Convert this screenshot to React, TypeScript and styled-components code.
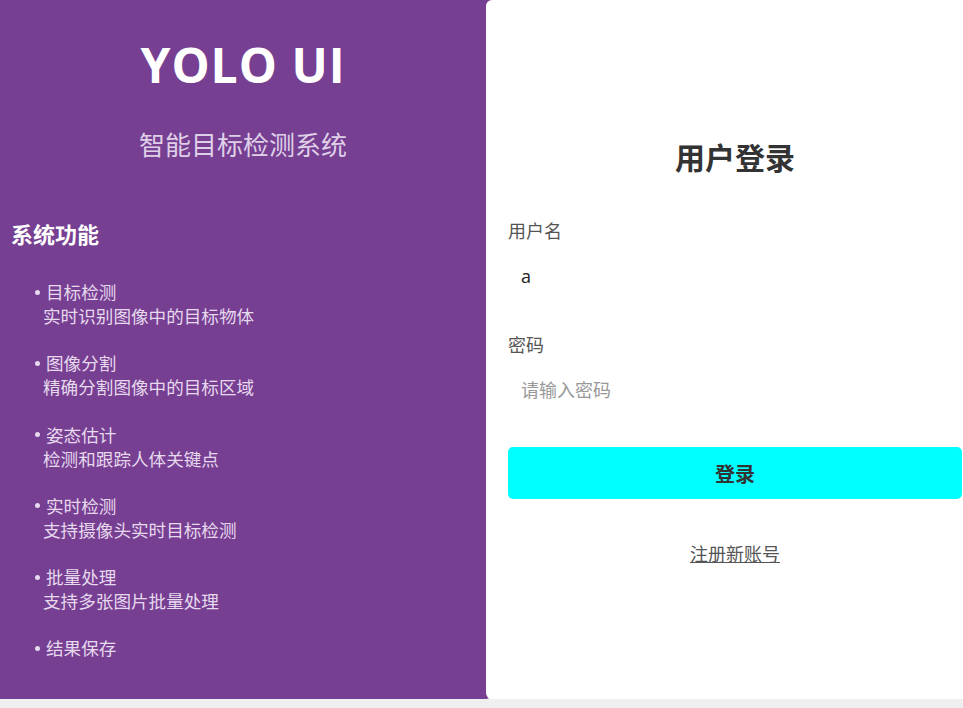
import React from "react";
import styled, { createGlobalStyle } from "styled-components";

const GlobalStyle = createGlobalStyle`
  html, body {
    margin: 0;
    padding: 0;
    background: #efefef;
    overflow: hidden;
  }
  body {
    font-family: "Open Sans", "Noto Sans CJK SC", sans-serif;
  }
  * { box-sizing: border-box; }
`;

const Page = styled.div`
  display: flex;
  height: 699px;
  width: 984px;
`;

const Intro = styled.section`
  flex: 0 0 492px;
  margin-right: -6px;
  background: #763f92;
  border-radius: 0 0 6px 0;
  padding: 0 16px 0 10px;
  color: #e6d9ee;
`;

const Brand = styled.h1`
  margin: 0;
  padding-top: 32px;
  text-align: center;
  font-size: 48px;
  line-height: 66px;
  font-weight: 700;
  letter-spacing: 1px;
  color: #ffffff;
`;

const Tagline = styled.p`
  margin: 29px 0 0;
  text-align: center;
  font-size: 26px;
  line-height: 36px;
  color: #dfd0e8;
`;

const SectionTitle = styled.h2`
  margin: 55px 0 0 1px;
  font-size: 22px;
  line-height: 32px;
  font-weight: 700;
  color: #ffffff;
`;

const FeatureList = styled.ul`
  list-style: none;
  margin: 30px 0 0;
  padding: 0 0 0 24px;
`;

const Feature = styled.li`
  font-size: 17.6px;
  line-height: 24px;
  margin-bottom: 23.3px;
`;

const FeatureName = styled.div`
  display: flex;
  align-items: center;
  padding-left: 1px;
`;

const Dot = styled.span`
  width: 5px;
  height: 5px;
  border-radius: 50%;
  background: #e6d9ee;
  margin-right: 6px;
  flex: none;
`;

const FeatureDesc = styled.div`
  padding-left: 9px;
`;

const LoginCard = styled.section`
  flex: 0 0 498px;
  background: #ffffff;
  border-radius: 6px;
  padding: 140px 22px 0;
  display: flex;
  flex-direction: column;
`;

const LoginTitle = styled.h2`
  margin: 0 0 42px;
  text-align: center;
  font-size: 30px;
  line-height: 36px;
  font-weight: 700;
  color: #333333;
`;

const Field = styled.div`
  display: flex;
  flex-direction: column;
  margin-bottom: 31px;
`;

const Label = styled.label`
  font-size: 18px;
  line-height: 27px;
  color: #555555;
`;

const Input = styled.input`
  margin-top: 6px;
  height: 50px;
  border: none;
  outline: none;
  padding: 0 13px;
  font-family: inherit;
  font-size: 18px;
  color: #222222;
  background: #ffffff;
  &::placeholder {
    color: #999999;
  }
`;

const SubmitButton = styled.button`
  flex: none;
  margin-top: 1px;
  height: 52px;
  border: none;
  border-radius: 5px;
  background: #00ffff;
  color: #333333;
  font-family: inherit;
  font-size: 20px;
  font-weight: 700;
  cursor: pointer;
`;

const RegisterLink = styled.a`
  margin-top: 42px;
  align-self: center;
  font-size: 18px;
  line-height: 27px;
  color: #555555;
  text-decoration: underline;
  cursor: pointer;
`;

const features = [
  { name: "目标检测", desc: "实时识别图像中的目标物体" },
  { name: "图像分割", desc: "精确分割图像中的目标区域" },
  { name: "姿态估计", desc: "检测和跟踪人体关键点" },
  { name: "实时检测", desc: "支持摄像头实时目标检测" },
  { name: "批量处理", desc: "支持多张图片批量处理" },
  { name: "结果保存", desc: "" },
];

export default function App() {
  return (
    <>
      <GlobalStyle />
      <Page>
        <Intro>
          <Brand>YOLO UI</Brand>
          <Tagline>智能目标检测系统</Tagline>
          <SectionTitle>系统功能</SectionTitle>
          <FeatureList>
            {features.map((f) => (
              <Feature key={f.name}>
                <FeatureName>
                  <Dot />
                  {f.name}
                </FeatureName>
                {f.desc && <FeatureDesc>{f.desc}</FeatureDesc>}
              </Feature>
            ))}
          </FeatureList>
        </Intro>
        <LoginCard>
          <LoginTitle>用户登录</LoginTitle>
          <Field>
            <Label>用户名</Label>
            <Input defaultValue="a" />
          </Field>
          <Field>
            <Label>密码</Label>
            <Input type="password" placeholder="请输入密码" />
          </Field>
          <SubmitButton>登录</SubmitButton>
          <RegisterLink>注册新账号</RegisterLink>
        </LoginCard>
      </Page>
    </>
  );
}
